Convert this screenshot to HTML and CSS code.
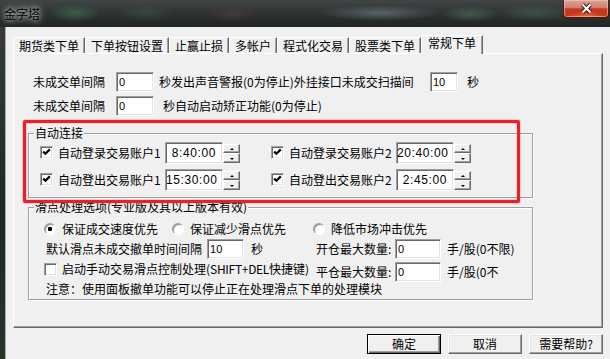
FILE: index.html
```html
<!DOCTYPE html>
<html lang="zh-CN">
<head>
    <meta charset="UTF-8">
    <title>金字塔</title>
    <link rel="stylesheet" href="styles.css">
</head>
<body>
<div class="window">
    <div class="titlebar">
        <span class="title">金字塔</span>
        <span class="close">
            <svg width="13" height="11" viewBox="0 0 13 11">
                <path d="M2.5 1.5 L10.5 9.5 M10.5 1.5 L2.5 9.5" stroke="#3b0d06" stroke-width="4" fill="none"/>
                <path d="M2.5 1.5 L10.5 9.5 M10.5 1.5 L2.5 9.5" stroke="#fff" stroke-width="2.2" fill="none"/>
            </svg>
        </span>
    </div>

    <div class="client">
        <div class="tabs">
            <span class="tab">期货类下单</span>
            <span class="tab">下单按钮设置</span>
            <span class="tab">止赢止损</span>
            <span class="tab">多帐户</span>
            <span class="tab">程式化交易</span>
            <span class="tab">股票类下单</span>
            <span class="tab active">常规下单</span>
        </div>

        <div class="panel">
            <div class="row">
                <span class="lbl">未成交单间隔</span>
                <input class="edit first" type="text" value="0">
                <span class="txt wide">秒发出声音警报(0为停止)外挂接口未成交扫描间</span>
                <input class="edit short" type="text" value="10">
                <span class="txt sec">秒</span>
            </div>
            <div class="row">
                <span class="lbl">未成交单间隔</span>
                <input class="edit first" type="text" value="0">
                <span class="txt note">秒自动启动矫正功能(0为停止)</span>
            </div>

            <!-- 自动连接 -->
            <fieldset class="group conn">
                <legend>自动连接</legend>
                <div class="conn-grid">
                    <div class="cell">
                        <span class="chk on"></span>
                        <span class="cell-lbl">自动登录交易账户1</span>
                        <span class="spin"><span class="time">8:40:00</span><span class="arrows"><i class="up"></i><i class="down"></i></span></span>
                    </div>
                    <div class="cell">
                        <span class="chk on"></span>
                        <span class="cell-lbl">自动登录交易账户2</span>
                        <span class="spin"><span class="time">20:40:00</span><span class="arrows"><i class="up"></i><i class="down"></i></span></span>
                    </div>
                    <div class="cell">
                        <span class="chk on"></span>
                        <span class="cell-lbl">自动登出交易账户1</span>
                        <span class="spin"><span class="time">15:30:00</span><span class="arrows"><i class="up"></i><i class="down"></i></span></span>
                    </div>
                    <div class="cell">
                        <span class="chk on"></span>
                        <span class="cell-lbl">自动登出交易账户2</span>
                        <span class="spin"><span class="time">2:45:00</span><span class="arrows"><i class="up"></i><i class="down"></i></span></span>
                    </div>
                </div>
            </fieldset>

            <!-- 滑点处理 -->
            <fieldset class="group slip">
                <legend>滑点处理选项(专业版及其以上版本有效)</legend>
                <div class="srow">
                    <span class="opt o1"><span class="radio on"></span>保证成交速度优先</span>
                    <span class="opt o2"><span class="radio"></span>保证减少滑点优先</span>
                    <span class="opt"><span class="radio"></span>降低市场冲击优先</span>
                </div>
                <div class="srow">
                    <span class="left">
                        <span class="indent">默认滑点未成交撤单时间间隔</span>
                        <input class="edit mid" type="text" value="10">
                        <span class="txt gap7">秒</span>
                    </span>
                    <span class="qty-lbl">开仓最大数量:</span>
                    <input class="edit qty" type="text" value="0">
                    <span class="txt gap6">手/股(0不限)</span>
                </div>
                <div class="srow">
                    <span class="left">
                        <span class="chk"></span>
                        <span class="txt gap5">启动手动交易滑点控制处理(<span class="en">SHIFT+DEL</span>快捷键)</span>
                    </span>
                    <span class="qty-lbl low">平仓最大数量:</span>
                    <input class="edit qty low" type="text" value="0">
                    <span class="txt gap6 low">手/股(0不</span>
                </div>
                <div class="srow">
                    <span class="indent">注意：使用面板撤单功能可以停止正在处理滑点下单的处理模块</span>
                </div>
            </fieldset>
        </div>

        <div class="buttons">
            <span class="btn default">确定</span>
            <span class="btn">取消</span>
            <span class="btn">需要帮助?</span>
        </div>
    </div>

    <div class="mark"></div>
</div>
</body>
</html>
```

FILE: styles.css
```css
html, body {
    margin: 0;
    padding: 0;
}

body {
    width: 610px;
    height: 359px;
    overflow: hidden;
    font: 12px/14px "Noto Sans CJK SC", sans-serif;
    color: #000;
}

.window {
    position: relative;
    height: 359px;
    display: flex;
    flex-direction: column;
    background: linear-gradient(#3a3f3b, #1f2621 60%, #2b332b);
}

/* title bar, aero glass */
.titlebar {
    height: 27px;
    display: flex;
    align-items: flex-start;
    background:
        radial-gradient(ellipse 26px 9px at 75px 13px, rgba(70, 130, 95, .55), transparent),
        radial-gradient(ellipse 30px 9px at 145px 13px, rgba(60, 110, 90, .35), transparent),
        radial-gradient(ellipse 24px 8px at 232px 14px, rgba(120, 70, 80, .35), transparent),
        radial-gradient(ellipse 60px 8px at 380px 13px, rgba(130, 145, 165, .5), transparent),
        radial-gradient(ellipse 30px 8px at 470px 14px, rgba(90, 140, 110, .45), transparent),
        radial-gradient(ellipse 40px 9px at 535px 13px, rgba(80, 140, 115, .35), transparent),
        linear-gradient(#414545, #2c302f 55%, #202423);
}

.title {
    padding-left: 4px;
    line-height: 27px;
    font-size: 12px;
    text-shadow: 0 0 5px #d8dcdc, 0 0 9px #c8cccc;
}

.close {
    margin-left: auto;
    margin-right: 1px;
    width: 46px;
    height: 18px;
    box-sizing: border-box;
    border: 1px solid #4b1b12;
    border-top: none;
    border-radius: 0 0 4px 4px;
    background:
        radial-gradient(ellipse 18px 6px at 50% 100%, rgba(255, 150, 100, .6), transparent),
        linear-gradient(#d9a496, #cf7f6d 45%, #c23a20 52%, #c6361b);
    display: flex;
    align-items: center;
    justify-content: center;
    box-shadow: inset 0 0 0 1px rgba(255, 210, 200, .5);
}

.client {
    flex: 1;
    margin-left: 5px;
    border-left: 1px solid #a7adab;
    background: #f0f0f0;
}

/* tabs */
.tabs {
    display: flex;
    align-items: flex-end;
    height: 18px;
    padding: 8px 0 0 7px;
}

.tab {
    height: 16px;
    box-sizing: border-box;
    padding: 0 5px;
    line-height: 15px;
    border-top: 1px solid #fff;
    border-left: 1px solid #fff;
    border-right: 1px solid #696969;
    box-shadow: inset -1px 0 #a0a0a0;
    white-space: nowrap;
}

.tab.active {
    position: relative;
    z-index: 1;
    height: 19px;
    margin-bottom: -1px;
    padding: 0 6px;
    line-height: 14px;
    background: #f0f0f0;
}

.panel {
    margin-left: 7px;
    width: 590px;
    height: 275px;
    box-sizing: border-box;
    padding: 16px 0 0 14px;
    border: 1px solid;
    border-color: #fff #696969 #696969 #fff;
    box-shadow: inset -1px -1px #a0a0a0;
}

.row {
    display: flex;
    align-items: center;
    height: 24px;
    padding-left: 5px;
    white-space: nowrap;
}

.lbl {
    width: 72px;
}

.edit {
    box-sizing: border-box;
    height: 20px;
    margin: 0;
    padding: 0 0 0 2px;
    border: 1px solid;
    border-color: #a0a0a0 #fff #fff #a0a0a0;
    box-shadow: inset 1px 1px #696969, inset -1px -1px #e3e3e3;
    background: #fff;
    font: 11px "Liberation Sans", sans-serif;
    color: #000;
    outline: none;
}

.edit.first { margin-left: 11px; width: 38px; }
.edit.short { width: 28px; }
.edit.mid { margin-left: 5px; width: 37px; }
.edit.qty { width: 46px; }

.txt.wide { margin-left: 5px; width: 271px; }
.txt.sec { margin-left: 9px; }
.txt.note { margin-left: 9px; }
.gap5 { margin-left: 5px; }
.gap6 { margin-left: 6px; }
.gap7 { margin-left: 7px; }

.en {
    letter-spacing: -.3px;
}

/* group boxes */
.group {
    margin: 0;
    box-sizing: border-box;
    width: 505px;
    border: 1px solid #a0a0a0;
    box-shadow: inset 1px 1px #fff, 1px 1px #fff;
}

.group legend {
    padding: 0 1px;
    line-height: 12px;
    background: #f0f0f0;
    white-space: nowrap;
}

.conn {
    margin-top: 9px;
    padding: 0 0 4px 5px;
}

.conn-grid {
    display: grid;
    grid-template-columns: 231px 231px;
    grid-auto-rows: 27px;
    margin-left: 6px;
}

.cell {
    display: flex;
    align-items: center;
    white-space: nowrap;
}

.cell-lbl {
    width: 107px;
    margin-left: 5px;
}

.chk {
    flex: none;
    width: 13px;
    height: 13px;
    box-sizing: border-box;
    border: 1px solid;
    border-color: #a0a0a0 #fff #fff #a0a0a0;
    box-shadow: inset 1px 1px #696969, inset -1px -1px #e3e3e3;
    background: #fff;
}

.chk.on {
    background:
        url("data:image/svg+xml;utf8,<svg xmlns='http://www.w3.org/2000/svg' width='9' height='9' viewBox='0 0 9 9'><path d='M1.2 3.6 L3.4 5.8 L7.8 1.4' stroke='black' stroke-width='2.2' fill='none'/></svg>") 1px 1px no-repeat,
        #fff;
}

.spin {
    display: flex;
    height: 22px;
}

.time {
    width: 58px;
    box-sizing: border-box;
    padding-right: 6px;
    border: 1px solid;
    border-color: #a0a0a0 #fff #fff #a0a0a0;
    box-shadow: inset 1px 1px #696969, inset -1px -1px #e3e3e3;
    background: #fff;
    text-align: right;
    font: 12px/20px "Liberation Sans", sans-serif;
    letter-spacing: .6px;
}

.arrows {
    display: flex;
    flex-direction: column;
    width: 17px;
    padding: 2px 0 1px;
    box-sizing: border-box;
}

.arrows i {
    flex: 1;
    position: relative;
    box-sizing: border-box;
    border: 1px solid;
    border-color: #fff #696969 #696969 #fff;
    box-shadow: inset -1px -1px #a0a0a0;
    background: #f0f0f0;
}

.arrows i::after {
    content: "";
    position: absolute;
    left: 6px;
    top: 3px;
    border: 2px solid transparent;
}

.arrows .up::after {
    top: 1px;
    border-bottom-color: #000;
}

.arrows .down::after {
    top: 4px;
    border-top-color: #000;
}

.slip {
    margin-top: 3px;
    padding: 6px 0 0 5px;
}

.srow {
    display: flex;
    align-items: center;
    height: 20px;
    padding-left: 10px;
    white-space: nowrap;
}

.opt {
    display: flex;
    align-items: center;
}

.opt.o1 { width: 128px; }
.opt.o2 { width: 141px; }

.radio {
    flex: none;
    width: 12px;
    height: 12px;
    margin-right: 6px;
    box-sizing: border-box;
    border-radius: 50%;
    border: 1px solid;
    border-color: #a0a0a0 #fff #fff #a0a0a0;
    box-shadow: inset 1px 1px #8c8c8c;
    background: #fff;
}

.radio.on {
    background: radial-gradient(circle at 50% 50%, #000 2px, #fff 2.5px);
}

.left {
    display: flex;
    align-items: center;
    width: 272px;
}

.indent {
    margin-left: 2px;
}

.qty-lbl {
    width: 79px;
}

.low {
    position: relative;
    top: 3px;
}

/* bottom buttons */
.buttons {
    display: flex;
    justify-content: flex-end;
    gap: 7px;
    margin: 6px 0 0 7px;
    width: 590px;
}

.btn {
    width: 74px;
    height: 20px;
    box-sizing: border-box;
    border: 1px solid;
    border-color: #fff #696969 #696969 #fff;
    box-shadow: inset -1px -1px #a0a0a0, inset 1px 1px #e3e3e3;
    text-align: center;
    line-height: 18px;
}

.btn.default {
    border-color: #000;
    box-shadow: inset 1px 1px #fff, inset -1px -1px #696969, inset -2px -2px #a0a0a0;
}

/* red highlight drawn over the dialog */
.mark {
    position: absolute;
    left: 23px;
    top: 120px;
    width: 497px;
    height: 83px;
    box-sizing: border-box;
    border: 3px solid #e5222b;
    border-radius: 2px;
    box-shadow: 0 0 2px rgba(229, 34, 43, .7), inset 0 0 2px rgba(229, 34, 43, .6);
    pointer-events: none;
}
```
